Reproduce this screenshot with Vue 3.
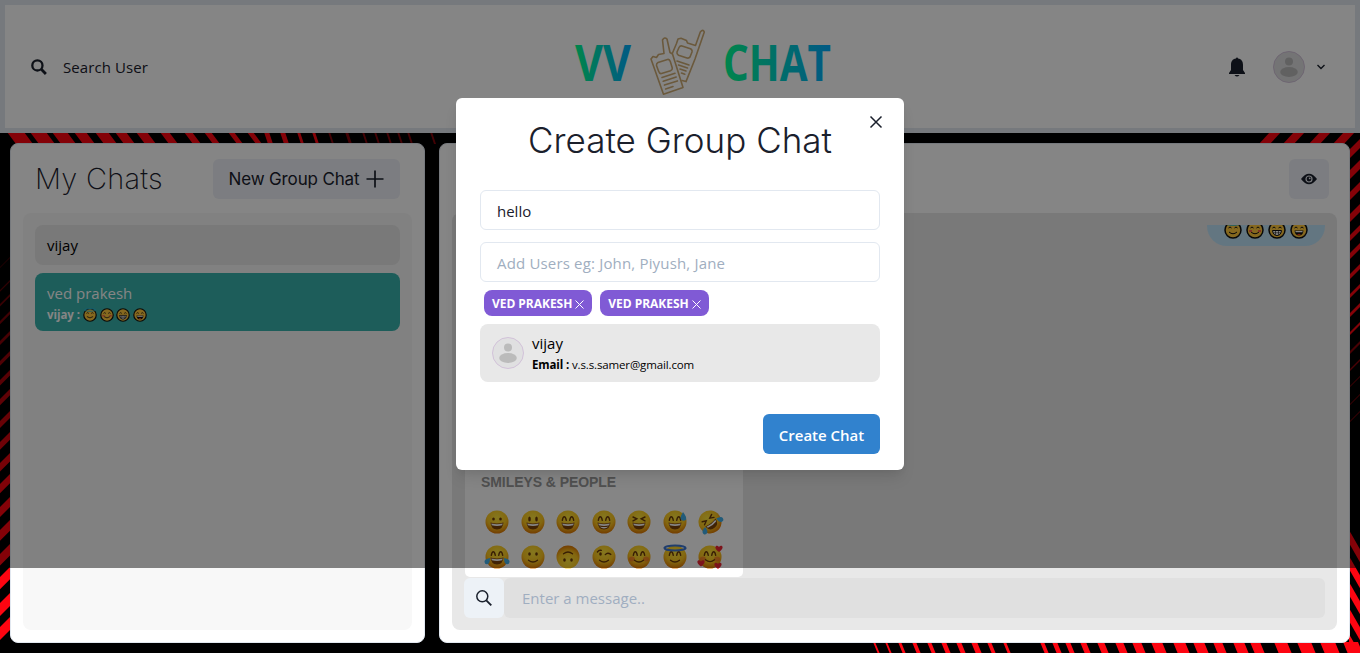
<script setup>
const grin = 'M5.5 12.6Q12 14.4 18.5 12.6Q18 19.4 12 19.4T5.5 12.6Z'
const arcs = ['M6.3 10.3Q7 6.8 8.3 6.8T10.3 10.3', 'M13.7 10.3Q14.4 6.8 15.7 6.8T17.7 10.3']
const faces = [
  { name: 'grinning', dots: 1.5, grin: true },
  { name: 'smiley', dots: 2.6, grin: true },
  { name: 'smile', lines: arcs, grin: true },
  { name: 'beaming', lines: arcs, grin: true, teeth: true },
  { name: 'laughing', lines: ['M6 7l3.8 1.8L6 10.8', 'M18 7l-3.8 1.8 3.8 2'], grin: true },
  { name: 'sweat', lines: arcs, grin: true, sweat: true },
  { name: 'rofl', lines: ['M6 7l3.8 1.8L6 10.8', 'M18 7l-3.8 1.8 3.8 2'], grin: true, tears: true, tilt: -38 },
  { name: 'joy', lines: arcs, grin: true, tears: true },
  { name: 'slight', dots: 1.7, lines: ['M7.5 15.2Q12 18.8 16.5 15.2'] },
  { name: 'upside', dots: 1.7, lines: ['M7.5 15.2Q12 18.8 16.5 15.2'], tilt: 180 },
  { name: 'wink', dots: 1.7, wink: true, lines: ['M13.3 9.6Q15.5 7.2 18.8 9.4', 'M7.5 15.2Q12 18.8 16.5 15.2', 'M5.4 7Q7 4.8 9.3 5.4'] },
  { name: 'blush', lines: [...arcs, 'M7.5 15.2Q12 18.8 16.5 15.2'], blush: true },
  { name: 'halo', lines: [...arcs, 'M7.5 15.2Q12 18.8 16.5 15.2'], halo: true },
  { name: 'hearts', lines: [...arcs, 'M7.5 14.8Q12 18.4 16.5 14.8'], blush: true, hearts: true },
]
const reactions = ['halo', 'blush', 'teeth', 'open']
const heart = 'M0 3C-7-2-2-5 0-2C2-5 7-2 0 3Z'

// Slanted bands of the striped backdrop
const band = (x, y, w, h, dx, dy) => `M${x} ${y}l${w} ${h}l${dx} ${dy}l${-w} ${-h}Z`
const topLeft = [[7, 17], [30, 16], [52, 15], [74, 12], [95, 13], [115, 11], [136, 11], [160, 9], [184, 8], [204, 7], [228, 6], [247, 6], [264, 5], [280, 5], [297, 3], [312, 3], [328, 2], [345, 3], [362, 2], [374, 2], [386, 2], [397, 2], [407, 2], [430, 2]]
  .map(([x, w], i) => ({ d: band(x, 132, w, 0, i < 12 ? 9 : 4, 12), o: i > 15 ? 0.5 : 1 }))
const topRight = [1270, 1294, 1320, 1344].map(x => ({ d: band(x, 132, 11, 0, -12, 13), o: 1 }))
const left = [267, 290, 304, 321, 341, 361, 380, 399, 421, 442, 463, 484, 507, 530, 554, 577, 603, 627]
  .map((y, i) => ({ d: band(0, y, 0, Math.min(13, 1 + i * 0.75), 12, -12), o: Math.min(1, 0.3 + i * 0.06) }))
const right = [[150, 9], [171, 9], [193, 8], [215, 8], [236, 6], [254, 6], [275, 5], [295, 4], [314, 4], [333, 3], [352, 3], [370, 2], [387, 1], [405, 1], [422, 1]]
  .map(([y, w], i) => ({ d: band(1349, y, 0, w, 12, -12), o: i > 9 ? 0.55 : 1 }))
const rightLow = [530, 556, 582, 608, 634].map(y => ({ d: band(1349, y, 0, 13, 12, 21), o: 1 }))
const bottom = [[873, 2], [885, 2], [898, 3], [912, 4], [927, 4], [941, 5], [956, 5], [971, 6], [987, 4], [1003, 3], [1040, 4], [1052, 5], [1065, 5], [1080, 6], [1097, 7], [1115, 8], [1132, 9], [1151, 11], [1173, 12], [1193, 11], [1213, 9], [1233, 11], [1250, 10], [1274, 13], [1297, 14], [1320, 15], [1343, 15]]
  .map(([x, w]) => ({ d: band(x, 642, w, 0, 5, 12), o: 1 }))
const stripes = [...topLeft, ...topRight, ...left, ...right, ...rightLow, ...bottom]
</script>

<template>
  <div class="page">
    <svg class="backdrop" width="1360" height="653" viewBox="0 0 1360 653">
      <path v-for="(s, i) in stripes" :key="i" :d="s.d" :opacity="s.o" fill="#fd0511" />
    </svg>

    <header class="top">
      <div class="search">
        <svg width="16" height="16" viewBox="0 0 16 16"><circle cx="6.4" cy="6.4" r="5.1" fill="none" stroke="#1a202c" stroke-width="2.3" /><path d="M10.3 10.3l4.6 4.6" stroke="#1a202c" stroke-width="2.8" /></svg>
        <span>Search User</span>
      </div>
      <svg class="logo" width="260" height="72" viewBox="0 0 260 72">
        <defs>
          <linearGradient id="brand"><stop offset="0" stop-color="#00ff90" /><stop offset="1" stop-color="#00aaff" /></linearGradient>
        </defs>
        <text x="2" y="53" textLength="56" lengthAdjust="spacingAndGlyphs" fill="url(#brand)">VV</text>
        <text x="150" y="53" textLength="108" lengthAdjust="spacingAndGlyphs" fill="url(#brand)">CHAT</text>
        <g fill="none" stroke="#cdab74" stroke-width="1.6" stroke-linejoin="round" stroke-linecap="round">
          <path d="M78 31L80 28.500L83.500 29.500L85.500 26.500L91 25.500L89.500 12Q91.500 8.500 94 11L97 24.500L99.500 26L110 59.500L90.500 66.300Z" />
          <path d="M85 34.500L94.500 31.500Q96.500 31 97.300 33.500L99.300 40Q99.500 42 97.500 42.700L88.500 45.500Q86.500 46 85.500 43L83.500 37.500Q83.300 35.300 85 34.500Z" />
          <path d="M89 49.500L102 45.300M90.200 53.300L103.200 49.100M91.400 57.100L104.400 52.900M92.600 60.900L100 58.500" />
          <path d="M99.500 25L103.500 15.500L105 11L108 10.300L113.500 12.500L114.500 15L122.500 17.500L127.300 4Q130 .8 131.300 4L122 31L113 53.600L109 52.500" />
          <path d="M106 19.500Q107 17.500 109 18L117.500 20.800Q119.500 21.800 119 24L117 29Q116 30.500 114 30L105.500 27.200Q103.500 26 104 24Z" />
          <path d="M104 33L116 37M105.500 37L114.500 40M107 41L113 43M108.500 45L111.800 46.200" />
        </g>
      </svg>
      <div class="account">
        <svg width="16" height="20" viewBox="0 0 16 20"><path d="M7 1.500a1 1 0 0 1 2 0C12.600 2 14 4.500 14 8v5l2 3v1H0v-1l2-3V8c0-3.500 1.400-6 5-6.500ZM5.500 18h5Q8 21 5.500 18Z" fill="#1a202c" /></svg>
        <svg class="avatar" width="32" height="32" viewBox="0 0 32 32"><circle cx="16" cy="16" r="15.500" fill="#dfdfe1" stroke="#cdb9d6" stroke-width=".8" /><circle cx="16" cy="10.500" r="4" fill="#bbb" /><ellipse cx="16" cy="21" rx="8.800" ry="5" fill="#bbb" /></svg>
        <svg width="8" height="6" viewBox="0 0 8 6"><path d="M.5 1L4 4.500 7.500 1" fill="none" stroke="#1a202c" stroke-width="1.400" /></svg>
      </div>
    </header>

    <main>
      <section class="panel chats">
        <div class="chats-head">
          <h2>My Chats</h2>
          <button class="soft new-group"><span>New Group Chat</span><svg width="18" height="18" viewBox="0 0 18 18"><path d="M9 .5v17M.5 9h17" stroke="#1a202c" stroke-width="1.700" /></svg></button>
        </div>
        <div class="chat-list">
          <div class="chat">vijay</div>
          <div class="chat active">
            <div>ved prakesh</div>
            <div class="last"><b>vijay :</b><svg v-for="r in reactions" :key="r" width="14" height="14" viewBox="0 0 18 18"><use :href="'#r-' + r" /></svg></div>
          </div>
        </div>
      </section>

      <section class="panel room">
        <div class="room-head"><button class="soft eye"><svg width="16" height="12" viewBox="0 0 16 12"><path d="M0 6Q8-4.500 16 6Q8 16.500 0 6Z" fill="#1a202c" /><circle cx="8" cy="6" r="3" fill="none" stroke="#e8eaf0" stroke-width="1.200" /><circle cx="8.700" cy="5.300" r=".9" fill="#e8eaf0" /></svg></button></div>
        <div class="conversation">
          <div class="bubble">
            <svg v-for="r in reactions" :key="r" width="18" height="18" viewBox="0 0 18 18"><use :href="'#r-' + r" /></svg>
          </div>
          <div class="picker">
            <h3>Smileys &amp; People</h3>
            <div class="emojis">
              <svg v-for="f in faces" :key="f.name" width="24" height="24" viewBox="0 0 24 24">
                <g :transform="`rotate(${f.tilt || 0} 12 12)`">
                  <circle cx="12" cy="12" r="11.500" fill="url(#face)" />
                  <g v-if="f.blush" fill="#f3532d" opacity=".5"><ellipse cx="5" cy="14" rx="3" ry="2.500" /><ellipse cx="19" cy="14" rx="3" ry="2.500" /></g>
                  <g v-if="f.dots" fill="#6b3b09"><ellipse cx="8.500" cy="9" rx="1.300" :ry="f.dots" /><ellipse v-if="!f.wink" cx="15.500" cy="9" rx="1.300" :ry="f.dots" /></g>
                  <path v-for="l in f.lines" :key="l" :d="l" fill="none" stroke="#6b3b09" stroke-width="1.400" stroke-linecap="round" />
                  <template v-if="f.grin">
                    <path :d="grin" fill="#7c4108" />
                    <path d="M6.300 13.500Q12 15 17.700 13.500L17.200 15.300Q12 16.600 6.800 15.300Z" fill="#fff" />
                    <path v-if="f.teeth" d="M7.500 16.500Q12 17.500 16.500 16.500Q12 20.500 7.500 16.500Z" fill="#fff" />
                  </template>
                  <g v-if="f.tears" fill="#42aee8"><path d="M5 13Q-1 14-.5 17Q0 20 3 19Q5 18 5 13Z" /><path d="M19 13Q25 14 24.500 17Q24 20 21 19Q19 18 19 13Z" /></g>
                </g>
                <path v-if="f.sweat" d="M20 2Q24 7 23 10Q19 12 17.500 8.500Q17.500 6 20 2Z" fill="#42aee8" />
                <ellipse v-if="f.halo" cx="12" cy="3" rx="10.500" ry="2.500" fill="none" stroke="#3e78d2" stroke-width="2.200" />
                <g v-if="f.hearts" fill="#ed2735"><path :d="heart" transform="translate(21 4)" /><path :d="heart" transform="translate(3 18.500)" /><path :d="heart" transform="translate(20 21)" /></g>
              </svg>
            </div>
          </div>
          <div class="composer">
            <button><svg width="16" height="16" viewBox="0 0 16 16" fill="none" stroke="#1a202c"><circle cx="6.300" cy="6.300" r="5.500" stroke-width="1.500" /><path d="M10.300 10.300l5 5" stroke-width="1.900" /></svg></button>
            <div class="message">Enter a message..</div>
          </div>
        </div>
      </section>
    </main>

    <svg width="0" height="0" class="defs">
      <defs>
        <radialGradient id="face" cx=".5" cy=".3" r=".72"><stop offset="0" stop-color="#ffe53b" /><stop offset=".6" stop-color="#fbc51f" /><stop offset="1" stop-color="#dc7100" /></radialGradient>
        <g id="r-base"><circle cx="9" cy="9" r="8" fill="#ffc83d" stroke="#111" stroke-width="1.500" /><path d="M4.500 7q1.500-2 3 0M10.500 7q1.500-2 3 0" fill="none" stroke="#111" /></g>
        <g id="r-halo"><use href="#r-base" /><path d="M5 11q4 3.500 8 0" fill="none" stroke="#111" /><ellipse cx="9" cy="2.500" rx="7" ry="1.700" fill="none" stroke="#2bb8d4" stroke-width="1.300" /></g>
        <g id="r-blush"><use href="#r-base" /><path d="M5 11q4 3.500 8 0" fill="none" stroke="#111" /><path d="M3 10h3M12 10h3" stroke="#f4644d" stroke-width="2" /></g>
        <g id="r-teeth"><use href="#r-base" /><path d="M4.500 9.500h9q-.5 5-4.500 5t-4.500-5Z" fill="#fff" stroke="#111" /><path d="M5 11.800h8M7.500 10v4M10.500 10v4" stroke="#111" stroke-width=".6" /></g>
        <g id="r-open"><use href="#r-base" /><path d="M4.500 9.500h9q-.5 5-4.500 5t-4.500-5Z" fill="#111" /><path d="M5.500 10h7v1.300h-7z" fill="#fff" /><path d="M7 13.500q2-1.500 4 0q-2 1.500-4 0" fill="#f03a17" /></g>
      </defs>
    </svg>

    <div class="overlay"></div>
    <div class="modal">
      <svg class="close" width="12" height="12" viewBox="0 0 12 12"><path d="M.5.5l11 11M11.500.5l-11 11" stroke="#1a202c" stroke-width="1.500" /></svg>
      <h1>Create Group Chat</h1>
      <div class="field"><span class="hello">hello</span></div>
      <div class="field placeholder"><span>Add Users eg: John, Piyush, Jane</span></div>
      <div class="tags">
        <span v-for="n in 2" :key="n" class="tag"><b>VED PRAKESH</b><svg width="9" height="9" viewBox="0 0 9 9"><path d="M.5.5l8 8M8.500.5l-8 8" stroke="#fff" /></svg></span>
      </div>
      <div class="user">
        <svg class="avatar" width="32" height="32" viewBox="0 0 32 32"><circle cx="16" cy="16" r="15.500" fill="#e0e0e1" stroke="#cdb9d6" stroke-width=".8" /><circle cx="16" cy="10.500" r="4" fill="#bbb" /><ellipse cx="16" cy="21" rx="8.800" ry="5" fill="#bbb" /></svg>
        <div><div class="name">vijay</div><div class="mail"><b>Email :</b> <span>v.s.s.samer@gmail.com</span></div></div>
      </div>
      <button class="create"><span>Create Chat</span></button>
    </div>
  </div>
</template>

<style>
body { background: #000; overflow: hidden; }
</style>
<style scoped>
* { box-sizing: border-box; }
.page { position: relative; width: 1360px; height: 653px; overflow: hidden; background: #000; font-family: "Open Sans", sans-serif; font-size: 15px; color: #1a202c; }
h1, h2, h3 { margin: 0; }
button { border: 0; padding: 0; font: inherit; color: inherit; display: flex; align-items: center; justify-content: center; }
svg { flex: none; overflow: visible; }
.backdrop { position: absolute; inset: 0; }
.defs { position: absolute; }
.top { position: relative; height: 133px; border: 5px solid #e2e8f0; background: #fff; display: flex; align-items: center; justify-content: space-between; padding: 0 30px 0 26px; }
.search { display: flex; align-items: center; gap: 16px; width: 240px; font-weight: 500; letter-spacing: .08px; }
.logo { position: absolute; left: 568px; top: 23px; }
.logo text { font: 700 51px "Open Sans", sans-serif; }
.account { display: flex; align-items: center; }
.account .avatar { margin: 0 12px 0 28px; }
main { position: relative; display: flex; gap: 14px; padding: 10px; height: 520px; }
.panel { background: #fff; border: 1px solid #e2e8f0; border-radius: 8px; height: 500px; }
.chats { width: 415px; padding: 15px 12px 12px; }
.chats-head { display: flex; align-items: center; justify-content: space-between; padding: 0 12px 0 12px; height: 40px; }
h2 { font: 200 29px/40px Inter, sans-serif; letter-spacing: .25px; }
.soft { background: #edf0f7; border-radius: 6px; height: 40px; }
.new-group { width: 187px; gap: 7px; font: 400 17px Inter, sans-serif; letter-spacing: -.15px; }
.chat-list { margin-top: 14px; height: 417px; background: #f8f8f8; border-radius: 8px; padding: 12px; display: flex; flex-direction: column; gap: 8px; }
.chat { height: 40px; border-radius: 8px; background: #e8e8e8; color: #000; padding: 8px 12px; line-height: 24px; }
.chat.active { height: 58px; background: #38b2ac; color: #fff; }
.last { display: flex; align-items: center; gap: 2.500px; font-size: 11.500px; line-height: 20px; }
.last b { margin-right: 1px; letter-spacing: -.05px; }
.room { flex: 1; padding: 15px 12px 12px; }
.room-head { display: flex; justify-content: flex-end; padding-right: 8px; }
.eye { width: 40px; }
.conversation { margin-top: 14px; height: 417px; background: #e8e8e8; border-radius: 8px; padding: 12px; display: flex; flex-direction: column; }
.bubble { align-self: flex-end; width: 118px; height: 21px; background: #bee3f8; border-radius: 0 0 20px 20px; display: flex; justify-content: center; gap: 4px; overflow: hidden; }
.bubble svg { margin-top: -4px; }
.picker { margin-top: auto; margin-left: 1px; width: 278px; height: 170px; background: #fff; border-radius: 5px; padding: 68px 16px 0; flex: none; }
h3 { font: 700 14px/14px "Liberation Sans", sans-serif; color: #999; text-transform: uppercase; letter-spacing: -.07px; }
.emojis { display: grid; grid-template-columns: repeat(7, 24px); gap: 11px 11.500px; margin: 21px 0 0 4px; }
.composer { display: flex; margin-top: 1px; height: 40px; flex: none; }
.composer button { width: 40px; background: #edf2f7; border-radius: 6px; }
.message { flex: 1; background: #e0e0e0; border-radius: 6px; padding-left: 18px; line-height: 41px; color: #a0aec0; }
.overlay { position: absolute; inset: 0 0 auto; height: 568px; background: rgba(0, 0, 0, .48); }
.modal { position: absolute; left: 456px; top: 98px; width: 448px; height: 372px; background: #fff; border-radius: 6px; padding: 16px 24px; display: flex; flex-direction: column; box-shadow: 0 10px 15px -3px rgba(0,0,0,.1), 0 4px 6px -2px rgba(0,0,0,.05); }
.close { position: absolute; right: 22px; top: 18px; }
h1 { font: 300 35px/52px Inter, sans-serif; text-align: center; letter-spacing: .02px; height: 76px; }
.field { height: 40px; flex: none; border: 1px solid #e2e8f0; border-radius: 6px; padding-left: 16px; line-height: 41px; margin-bottom: 12px; }
.placeholder { color: #a0aec0; margin-bottom: 8px; letter-spacing: .17px; }
.tags { display: flex; gap: 8px; padding-left: 4px; }
.tag { height: 26px; width: 108.300px; border-radius: 8px; background: #805ad5; color: #fff; display: flex; align-items: center; justify-content: center; gap: 3px; font-size: 12px; letter-spacing: -.03px; }
.tag svg { margin-top: 3px; }
.user { margin-top: 8px; height: 58px; background: #e8e8e8; border-radius: 8px; padding: 0 12px; display: flex; align-items: center; gap: 8px; color: #000; }
.name { line-height: 23px; }
.mail { font-size: 11.500px; line-height: 19px; letter-spacing: -.13px; }
.create { margin: 32px 0 0 auto; width: 117px; height: 40px; background: #3182ce; color: #fff; border-radius: 6px; font-weight: 600; padding-top: 2px; }
</style>
